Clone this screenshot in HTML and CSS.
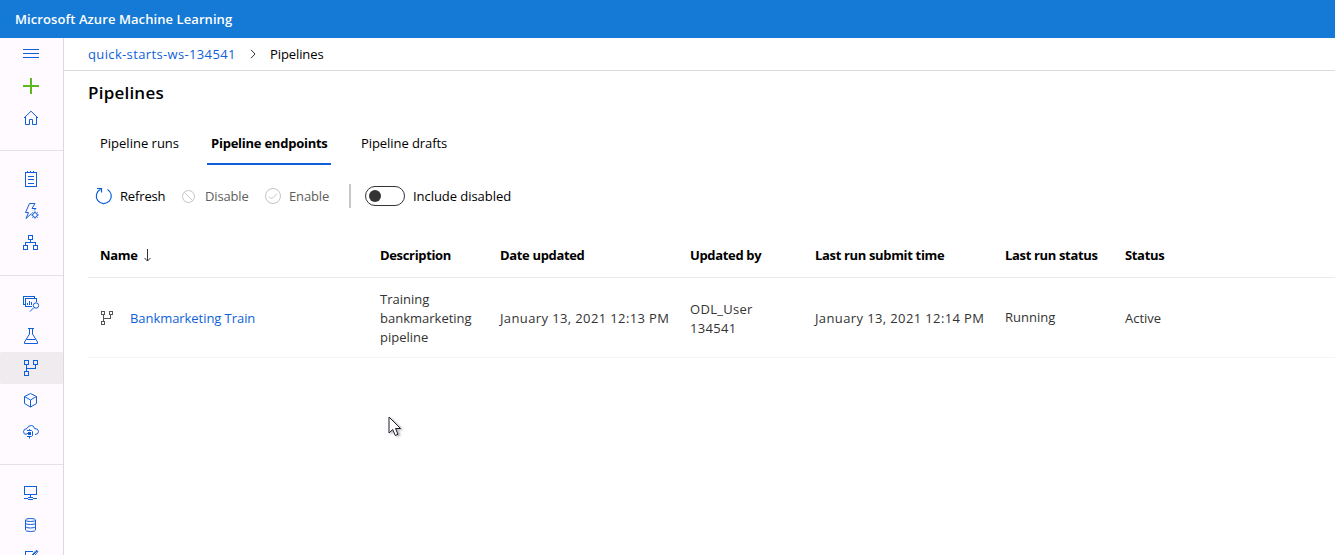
FILE: index.html
```
<!DOCTYPE html>
<html lang="en">
<head>
<meta charset="utf-8">
<title>Pipelines - Microsoft Azure Machine Learning</title>
<link rel="stylesheet" href="styles.css">
</head>
<body>
<header class="topbar"><span class="brand">Microsoft Azure Machine Learning</span></header>
<div class="shell">
  <nav class="sidebar">
    <div class="group">
      <a class="item"><svg class="icon" viewBox="0 0 16 16"><path d="M0 3.5h16M0 7.5h16M0 11.5h16"/></svg></a>
      <a class="item add"><svg class="icon" viewBox="0 0 16 16"><path d="M0 8h16M8 0v16"/></svg></a>
      <a class="item"><svg class="icon smooth" viewBox="0 0 16 16"><path d="M1 8L8 1.2L15 8M2.500 7v7.500h4v-5h3v5h4V7"/></svg></a>
    </div>
    <div class="group">
      <a class="item"><svg class="icon" viewBox="0 0 16 16"><path d="M2.500 1.500h11v14h-11zM5 5.500h6M5 8.500h6M5 12.500h6M4.500 0v2M7.500 0v2M10.500 0v2"/></svg></a>
      <a class="item"><svg class="icon smooth" viewBox="0 0 16 16"><path d="M8.500 10.500L3 15.500L5.500 9.500H2.500L6.500 .5H12L9 5.500H13L11 7.500"/><circle cx="12" cy="12" r="2.300"/><path d="M12 8.300v1.500M12 14.200v1.500M8.300 12h1.500M14.200 12h1.500M9.400 9.400l1 1M13.600 13.600l1 1M14.600 9.400l-1 1M10.400 13.600l-1 1"/></svg></a>
      <a class="item"><svg class="icon" viewBox="0 0 16 16"><path d="M5.500 .5h4v4h-4zM.5 10.500h4v4h-4zM10.500 10.500h4v4h-4zM7.500 4.500v3M2.500 10.500v-3h10v3"/></svg></a>
    </div>
    <div class="group">
      <a class="item"><svg class="icon" viewBox="0 0 16 16"><path d="M2 8.500H.5V.5h11v2M9 10.500H2.500v-8h11V6M4.500 7v2M6.500 5v4M8.500 6v3"/><g class="smooth"><circle cx="13" cy="9.500" r="2.700"/><path d="M11 11.500L7 15.500"/></g></svg></a>
      <a class="item"><svg class="icon smooth" viewBox="0 0 16 16"><path d="M5 .5h6M6.500 .5v5.500L1.500 14v1.500h13V14L9.500 6V.5M3.500 11.500h9"/></svg></a>
      <a class="item selected"><svg class="icon" viewBox="0 0 16 16"><path d="M1.500 .5h4v4h-4zM10.500 .5h4v4h-4zM1.500 11.500h4v4h-4zM3.500 4.500v7M3.500 8.500h9v-4"/></svg></a>
      <a class="item"><svg class="icon smooth" viewBox="0 0 16 16"><path d="M7.500 1.500L13.500 4.500V11.500L7.500 15L1.500 11.500V4.500zM1.500 4.500L7.500 8L13.500 4.500M7.500 8v7"/></svg></a>
      <a class="item"><svg class="icon smooth" viewBox="0 0 16 16"><path d="M3.500 10.500Q.5 10.500 .5 7.500Q.5 5 4 4.500Q5 1.500 8.500 1.500Q11 1.500 11.500 4.500Q15.500 4.500 15.500 7.500Q15.500 10.500 12 10.500"/><path d="M4 6.500h4.500l1 1v4l-1 1H4M6.500 5v1.500M6.500 12.500v2M3.500 9.500h2"/><path class="solid" d="M5 8h3v3H5z"/></svg></a>
    </div>
    <div class="group">
      <a class="item"><svg class="icon" viewBox="0 0 16 16"><path d="M1.500 1.500h12v8h-12zM7.500 9.500v2M1 13.500h3M11 13.500h3M5 12.500h5M4.500 13v1M10.500 13v1M5 14.500h5"/></svg></a>
      <a class="item"><svg class="icon smooth" viewBox="0 0 16 16"><path d="M2.500 3v10q0 1.500 5 1.500t5-1.500V3q0-1.500-5-1.500t-5 1.500q0 1.500 5 1.500t5-1.500M2.500 6q0 1.500 5 1.500t5-1.500M2.500 9.500q0 1.500 5 1.500t5-1.500"/></svg></a>
      <a class="item"><svg class="icon" viewBox="0 0 16 16"><path d="M10 2.500H2.500v13h11V8"/><path class="smooth" d="M7 8.500L13 1.500l2 1L9 9.500zM9 7L14 2"/></svg></a>
    </div>
  </nav>
  <main class="main">
    <div class="crumbs">
      <a class="link ws">quick-starts-ws-134541</a>
      <svg class="chevron" viewBox="0 0 6 10"><path d="M1 .8L5 5L1 9.200"/></svg>
      <span class="here">Pipelines</span>
    </div>
    <h1 class="title">Pipelines</h1>
    <div class="tabs">
      <a class="tab runs">Pipeline runs</a>
      <a class="tab active">Pipeline endpoints</a>
      <a class="tab drafts">Pipeline drafts</a>
    </div>
    <div class="toolbar">
      <button class="cmd refresh"><svg class="glyph" viewBox="0 0 18 18"><path d="M12.500 2.500A7.500 7.500 0 1 1 5.500 2.300M2 1.500h4.500V5.500"/></svg><span>Refresh</span></button>
      <button class="cmd disable"><svg class="glyph" viewBox="0 0 18 18"><circle cx="8.500" cy="9.500" r="6"/><path d="M4.500 5.500l8 8"/></svg><span>Disable</span></button>
      <button class="cmd enable"><svg class="glyph" viewBox="0 0 18 18"><circle cx="9" cy="9" r="7.500"/><path d="M5 9.500L7.500 12L13 6.500"/></svg><span>Enable</span></button>
      <span class="divider"></span>
      <span class="toggle"><span class="knob"></span></span>
      <span class="toggle-label">Include disabled</span>
    </div>
    <div class="table">
      <div class="row head">
        <div class="sorted"><span>Name</span><svg class="arrow" viewBox="0 0 8 13"><path d="M4.500 0v12M1.500 9l3 3l3-3"/></svg></div>
        <div>Description</div>
        <div>Date updated</div>
        <div>Updated by</div>
        <div>Last run submit time</div>
        <div>Last run status</div>
        <div>Status</div>
      </div>
      <div class="row body">
        <div class="name"><svg class="pipe" viewBox="0 0 14 16"><path d="M1.500 1.500h3v3h-3zM9.500 1.500h3v3h-3zM1.500 11.500h3v3h-3zM3.500 4.500v7M3.500 8.500h7v-4"/></svg><a class="link train">Bankmarketing Train</a></div>
        <div class="cell">Training<br>bankmarketing<br>pipeline</div>
        <div class="cell date">January 13, 2021 12:13 PM</div>
        <div class="cell by">ODL_User<br>134541</div>
        <div class="cell date">January 13, 2021 12:14 PM</div>
        <div>Running</div>
        <div class="cell">Active</div>
      </div>
    </div>
  </main>
</div>
<svg class="cursor" viewBox="0 0 14 21"><path d="M1 1v16l3.700-3.500L7.300 19.500l2.700-1.200L7.500 12.500h5z"/></svg>
</body>
</html>
```
FILE: styles.css
```
* { box-sizing: border-box; }
body {
  margin: 0;
  height: 555px;
  overflow: hidden;
  background: #fff;
  color: #000;
  font: 13px/19px "Open Sans", "Noto Sans", sans-serif;
  white-space: nowrap;
}
.topbar {
  display: flex;
  align-items: center;
  height: 38px;
  padding-left: 15px;
  background: #147ad6;
  color: #fff;
  font-weight: 600;
  letter-spacing: .08px;
}
.shell { display: flex; height: 517px; }
.sidebar {
  flex: none;
  width: 64px;
  overflow: hidden;
  background: #fefaff;
  border-right: 1px solid #dcd8dc;
}
.group { padding-bottom: 16px; }
.group + .group { padding-top: 12px; border-top: 1px solid #e4e0e4; }
.item { display: flex; align-items: center; height: 32px; padding-left: 23px; }
.selected { background: #efebef; border-radius: 2px; }
.icon {
  width: 16px;
  height: 16px;
  overflow: visible;
  fill: none;
  stroke: #0f5fd9;
  shape-rendering: crispEdges;
}
.smooth { shape-rendering: auto; }
.add .icon { stroke: #5db81e; stroke-width: 2; }
.solid { fill: #0f5fd9; stroke: none; }
.main { flex: 1; min-width: 0; }
.link { color: #0f5fd9; }
.crumbs {
  display: flex;
  align-items: center;
  height: 33px;
  padding-left: 24px;
  border-bottom: 1px solid #dcdadc;
}
.ws { width: 162px; letter-spacing: .36px; }
.here { letter-spacing: -.1px; }
.chevron { width: 6px; height: 10px; margin-right: 14px; fill: none; stroke: #333; }
.title {
  margin: 0;
  padding: 9px 0 0 24px;
  font-size: 17px;
  line-height: 26px;
  font-weight: 600;
  letter-spacing: .22px;
}
.tabs { display: flex; height: 44px; margin: 15px 0 0 32px; }
.tab { height: 44px; padding: 13px 4px 0; }
.runs { width: 87px; }
.active {
  width: 124px;
  margin: 0 26px 0 24px;
  border-bottom: 2px solid #0f5fd9;
  font-weight: 700;
  letter-spacing: -.24px;
}
.drafts { letter-spacing: -.07px; }
.toolbar { display: flex; align-items: center; height: 24px; margin: 19px 0 0 31px; }
.cmd {
  display: flex;
  align-items: center;
  gap: 7px;
  padding: 0;
  border: 0;
  background: none;
  font: inherit;
  letter-spacing: -.15px;
  color: #000;
}
.glyph { width: 18px; height: 18px; fill: none; stroke: #c4c4c4; }
.refresh { width: 85px; }
.refresh .glyph { stroke: #0f5fd9; stroke-width: 1.2; }
.disable { width: 84px; color: #605e5c; }
.enable { width: 85px; color: #605e5c; }
.divider { width: 2px; height: 24px; background: #c8c8c8; }
.toggle {
  display: flex;
  align-items: center;
  width: 40px;
  height: 20px;
  margin: 0 8px 0 14px;
  padding-left: 3px;
  border: 1px solid #333;
  border-radius: 10px;
}
.knob { width: 12px; height: 12px; border-radius: 50%; background: #333; }
.toggle-label { letter-spacing: -.05px; }
.table { margin: 26px 0 0 24px; }
.row {
  display: grid;
  grid-template-columns: 280px 120px 190px 125px 190px 120px 1fr;
  align-items: center;
  padding-left: 12px;
}
.head {
  height: 44px;
  border-bottom: 1px solid #eaeaea;
  font-weight: 700;
  letter-spacing: -.34px;
}
.body { height: 80px; border-bottom: 1px solid #f4f4f4; color: #333; }
.sorted, .name { display: flex; align-items: center; }
.arrow { width: 8px; height: 13px; margin-left: 5px; fill: none; stroke: #333; }
.pipe { width: 14px; height: 16px; margin: 1px 16px 0 0; fill: none; stroke: #555; shape-rendering: crispEdges; }
.cell, .train { padding-top: 2px; }
.train { letter-spacing: -.06px; }
.date { letter-spacing: .38px; }
.by { letter-spacing: .3px; }
.cursor {
  position: absolute;
  left: 388px;
  top: 416px;
  width: 14px;
  height: 21px;
  fill: #fff;
  stroke: #1c1c2c;
  filter: drop-shadow(2px 1px 1px rgba(0, 0, 0, .3));
}
```
